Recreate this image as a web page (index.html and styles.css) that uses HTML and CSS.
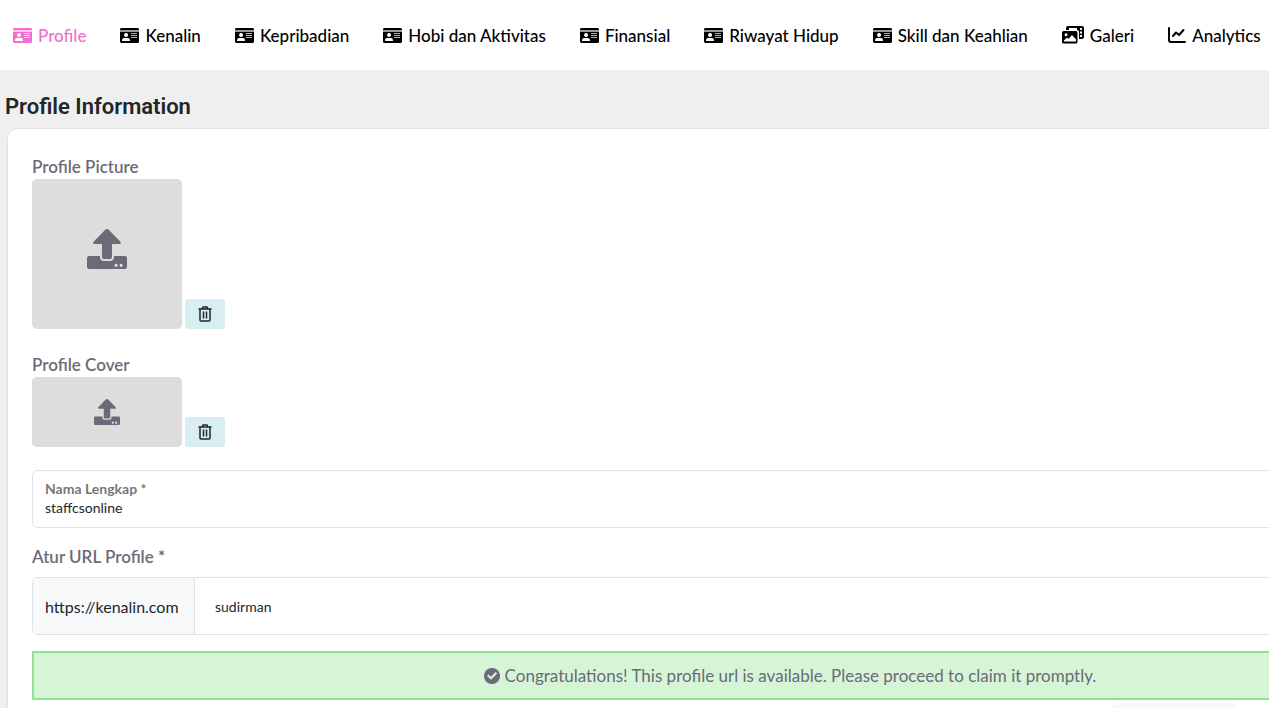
FILE: index.html
```html
<!DOCTYPE html>
<html lang="id">
<head>
	<meta charset="utf-8">
	<meta name="viewport" content="width=device-width, initial-scale=1">
	<title>Profile</title>
	<link rel="stylesheet" href="styles.css">
</head>
<body>
	<svg class="sprite" aria-hidden="true">
		<symbol id="icon-card" viewBox="0 0 19 15">
			<path d="M1 0h17l1 1v1H0V1z"/>
			<path opacity=".4" d="M0 2h19v2H0z"/>
			<path fill-rule="evenodd" d="M0 4h19v10l-1 1H1l-1-1zM6 5a2 2 0 1 0 .1 0zM2 13h8q0-3-2-3H4q-2 0-2 3z"/>
			<path fill="#fff" opacity=".7" d="M11 5h6v1h-6zM11 7h6v1h-6zM11 9h6v1h-6z"/>
		</symbol>
		<symbol id="icon-gallery" viewBox="0 0 22 18">
			<path fill-rule="evenodd" d="M6 0h14q2 0 2 2v9q0 2-2 2h-3V6q0-2-2-2H4V2q0-2 2-2zM7 2v2h8V2zM18 2v2h2V2zM18 5.500v2h2v-2zM18 9v2h2V9z"/>
			<path fill-rule="evenodd" d="M1.500 5h12.500q1.500 0 1.500 1.500v9.500q0 1.500-1.500 1.500H1.500Q0 17.500 0 16V6.500Q0 5 1.500 5zM4 7.200a1.500 1.500 0 1 0 .1 0zM2 15.500h12v-2l-4-4.500-3.500 4-1.500-1.500-3 3z"/>
		</symbol>
		<symbol id="icon-chart" viewBox="0 0 18 16">
			<path fill="none" stroke="currentColor" stroke-width="2" stroke-linecap="round" stroke-linejoin="round" d="M1 1v12q0 2 2 2h14M5 9l3-3.500 3 2.500 4.500-5"/>
		</symbol>
		<symbol id="icon-upload" viewBox="0 0 40 40">
			<path d="M20 0q1 0 1.500.5l12 12.200q1 2.300-1 2.300H25v13q0 2-2 2h-6q-2 0-2-2V15H7.500q-2 0-1-2.300l12-12.200Q19 0 20 0z"/>
			<path fill-rule="evenodd" d="M2 27h11v1q0 4 4 4h6q4 0 4-4v-1h11q2 0 2 2v9q0 2-2 2H2q-2 0-2-2v-9q0-2 2-2zM29 34.800a1.600 1.600 0 1 0 .1 0zM34 34.800a1.600 1.600 0 1 0 .1 0z"/>
		</symbol>
		<symbol id="icon-trash" viewBox="0 0 14 16">
			<path fill="none" stroke="currentColor" stroke-width="1.500" d="M.5 3h13M4 3l1-2h4l1 2M2 3v11q0 1 1 1h8q1 0 1-1V3M5.500 5.500v7M8.500 5.500v7"/>
		</symbol>
		<symbol id="icon-check" viewBox="0 0 16 16">
			<path fill-rule="evenodd" d="M8 0a8 8 0 1 0 .01 0zM7 11.800L3 7.900l1.500-1.500L7 8.800l4.700-4.700 1.500 1.500z"/>
		</symbol>
	</svg>

	<nav class="menu">
		<a class="menu-link active" href="#"><svg class="icon-card"><use href="#icon-card"/></svg>Profile</a>
		<a class="menu-link" href="#"><svg class="icon-card"><use href="#icon-card"/></svg>Kenalin</a>
		<a class="menu-link" href="#"><svg class="icon-card"><use href="#icon-card"/></svg>Kepribadian</a>
		<a class="menu-link" href="#"><svg class="icon-card"><use href="#icon-card"/></svg>Hobi dan Aktivitas</a>
		<a class="menu-link" href="#"><svg class="icon-card"><use href="#icon-card"/></svg>Finansial</a>
		<a class="menu-link" href="#"><svg class="icon-card"><use href="#icon-card"/></svg>Riwayat Hidup</a>
		<a class="menu-link" href="#"><svg class="icon-card"><use href="#icon-card"/></svg>Skill dan Keahlian</a>
		<a class="menu-link" href="#"><svg class="icon-gallery"><use href="#icon-gallery"/></svg>Galeri</a>
		<a class="menu-link" href="#"><svg class="icon-chart"><use href="#icon-chart"/></svg>Analytics</a>
	</nav>

	<main class="content">
		<h1 class="title">Profile Information</h1>
		<form class="card">
			<div class="upload">
				<label class="field-label" for="picture">Profile Picture</label>
				<div class="upload-row">
					<label class="drop" for="picture"><svg class="icon-upload"><use href="#icon-upload"/></svg></label>
					<input class="file" type="file" id="picture">
					<button class="btn-delete" type="button" aria-label="Hapus"><svg class="icon-trash"><use href="#icon-trash"/></svg></button>
				</div>
			</div>
			<div class="upload">
				<label class="field-label" for="cover">Profile Cover</label>
				<div class="upload-row">
					<label class="drop drop-cover" for="cover"><svg class="icon-upload"><use href="#icon-upload"/></svg></label>
					<input class="file" type="file" id="cover">
					<button class="btn-delete" type="button" aria-label="Hapus"><svg class="icon-trash"><use href="#icon-trash"/></svg></button>
				</div>
			</div>
			<div class="floating">
				<label class="floating-label" for="name">Nama Lengkap *</label>
				<input class="floating-input" type="text" id="name" value="staffcsonline">
			</div>
			<label class="field-label" for="url">Atur URL Profile *</label>
			<div class="input-group">
				<span class="input-addon">https://kenalin.com</span>
				<input class="input-url" type="text" id="url" value="sudirman">
			</div>
			<div class="notice"><svg class="icon-check"><use href="#icon-check"/></svg>Congratulations! This profile url is available. Please proceed to claim it promptly.</div>
			<div class="actions">
				<button class="btn-claim" type="button" aria-label="Claim"></button>
			</div>
		</form>
	</main>
</body>
</html>
```

FILE: styles.css
```css
* {
	box-sizing: border-box;
}
body {
	margin: 0;
	height: 100vh;
	overflow: hidden;
	background: #efefef;
	color: #212529;
	font-family: Lato, "Open Sans", sans-serif;
	font-size: 16px;
	line-height: 25px;
}
svg {
	flex: none;
	fill: currentColor;
}
input,
button {
	font-family: inherit;
}
.sprite {
	position: absolute;
	width: 0;
	height: 0;
}

/* top menu */
.menu {
	display: flex;
	align-items: center;
	gap: 34px;
	height: 70px;
	padding: 0 13px;
	background: #fff;
}
.menu-link {
	display: flex;
	align-items: center;
	gap: 6px;
	color: #000;
	font-size: 17px;
	font-weight: 500;
	text-decoration: none;
	white-space: nowrap;
}
.menu-link.active {
	color: #f06fce;
}
.icon-card {
	width: 19px;
	height: 15px;
}
.icon-gallery {
	width: 22px;
	height: 18px;
}
.icon-chart {
	width: 18px;
	height: 16px;
}

/* form card */
.content {
	min-width: 1580px;
	padding: 25px 7px 0;
}
.title {
	margin: 0 -2px 9px;
	font-family: Roboto, sans-serif;
	font-size: 22px;
	font-weight: 600;
	line-height: 24px;
}
.card {
	padding: 25px 24px;
	background: #fff;
	border: 1px solid #dee2e6;
	border-radius: 10px;
}
.upload {
	margin-bottom: 23px;
}
.field-label {
	display: block;
	color: #6c6a78;
	font-size: 17px;
	font-weight: 600;
}
.upload-row {
	display: flex;
	align-items: flex-end;
	gap: 3px;
}
.drop {
	display: flex;
	align-items: center;
	justify-content: center;
	width: 150px;
	height: 150px;
	padding-bottom: 10px;
	background: #ddd;
	border-radius: 5px;
	color: #6c6a78;
}
.drop-cover {
	height: 70px;
	padding-bottom: 0;
}
.icon-upload {
	width: 40px;
	height: 40px;
}
.drop-cover .icon-upload {
	width: 26px;
	height: 26px;
}
.file {
	display: none;
}
.btn-delete {
	display: flex;
	align-items: center;
	justify-content: center;
	width: 40px;
	height: 30px;
	padding: 0;
	background: #d9eef0;
	border: 0;
	border-radius: 3px;
	color: #212529;
}
.icon-trash {
	width: 14px;
	height: 16px;
}
.floating {
	display: flex;
	flex-direction: column;
	height: 58px;
	margin-bottom: 16px;
	padding: 9px 12px;
	border: 1px solid #dee2e6;
	border-radius: 6px;
}
.floating-label {
	color: #777;
	font-size: 14px;
	font-weight: 700;
	line-height: 18px;
}
.floating-input {
	height: 18px;
	padding: 0;
	border: 0;
	outline: 0;
	color: #212529;
	font-size: 14px;
}
.input-group {
	display: flex;
	height: 58px;
	margin: 8px 0 16px;
	border: 1px solid #dee2e6;
	border-radius: 6px;
	overflow: hidden;
}
.input-addon {
	display: flex;
	align-items: center;
	min-width: 162px;
	padding: 0 12px;
	background: #f8f9fa;
	border-right: 1px solid #dee2e6;
}
.input-url {
	flex: 1;
	padding: 0 20px;
	border: 0;
	outline: 0;
	color: #212529;
	font-size: 14px;
}
.notice {
	display: flex;
	align-items: center;
	justify-content: center;
	gap: 5px;
	height: 49px;
	background: #d6f5d6;
	border: 2px solid #90e390;
	color: #6c6a78;
	font-size: 17px;
}
.icon-check {
	width: 16px;
	height: 16px;
}
.actions {
	display: flex;
	justify-content: flex-end;
	padding: 3px 310px 0 0;
}
.btn-claim {
	width: 126px;
	height: 38px;
	background: #f8f9fa;
	border: 0;
	border-radius: 6px;
}
```
